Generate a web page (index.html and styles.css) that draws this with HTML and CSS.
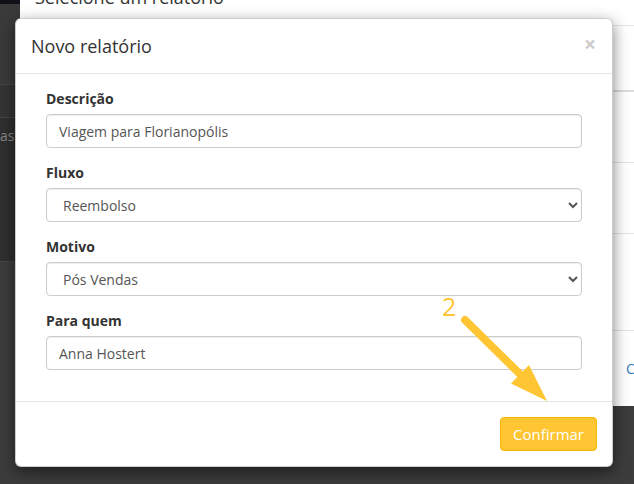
FILE: index.html
```html
<!DOCTYPE html>
<html lang="pt-BR">
<head>
<meta charset="utf-8">
<title>Novo relatório</title>
<link rel="stylesheet" href="styles.css">
</head>
<body>
  <div class="page">
    <div class="page-topbar"></div>
    <div class="page-sec page-sec1"></div>
    <div class="page-sec page-sec2"></div>
    <div class="page-sec page-sec3"><span class="page-text">as</span></div>
    <div class="page-rest"></div>
  </div>

  <div class="bg-modal">
    <div class="bg-header"><h4 class="bg-title">Selecione um relatório</h4></div>
    <div class="bg-row bg-row-head"></div>
    <div class="bg-row bg-row-a"></div>
    <div class="bg-row bg-row-b"></div>
    <div class="bg-row bg-row-c"></div>
    <div class="bg-footer"><span class="bg-link">Cancelar</span></div>
  </div>

  <div class="modal">
    <div class="modal-header">
      <h4 class="modal-title">Novo relatório</h4>
      <span class="close">&times;</span>
    </div>
    <div class="modal-body">
      <form class="form">
        <div class="form-group">
          <label class="label">Descrição</label>
          <input class="form-control" type="text" value="Viagem para Florianopólis">
        </div>
        <div class="form-group">
          <label class="label">Fluxo</label>
          <select class="form-control"><option>Reembolso</option></select>
        </div>
        <div class="form-group">
          <label class="label">Motivo</label>
          <select class="form-control"><option>Pós Vendas</option></select>
        </div>
        <div class="form-group">
          <label class="label">Para quem</label>
          <input class="form-control" type="text" value="Anna Hostert">
        </div>
      </form>
    </div>
    <div class="modal-footer">
      <button class="btn-confirm" type="button">Confirmar</button>
    </div>
  </div>

  <span class="step-number">2</span>
  <svg class="step-arrow" width="120" height="120" viewBox="0 0 120 120">
    <line x1="25" y1="30" x2="84" y2="88" stroke="#ffc533" stroke-width="8" stroke-linecap="round"/>
    <polygon points="107,111 71,93.5 89,75" fill="#ffc533"/>
  </svg>
</body>
</html>
```
FILE: styles.css
```css
* { box-sizing: border-box; }

body {
  margin: 0;
  width: 634px;
  height: 484px;
  overflow: hidden;
  position: relative;
  background: #3c3c3c;
  font-family: "Open Sans", "DejaVu Sans", sans-serif;
  font-size: 14px;
  color: #333;
}

/* underlying page, darkened by backdrop */
.page { display: flex; flex-direction: column; height: 484px; }
.page-topbar { height: 4px; background: #101018; }
.page-sec { border-bottom: 1px solid #454545; }
.page-sec1 { height: 81px; background: #3a3a3a; }
.page-sec2 { height: 33px; background: #343434; }
.page-sec3 { height: 144px; background: #2f2f2f; padding-top: 8px; overflow: hidden; }
.page-text { display: block; margin-left: 0; color: #888; font-size: 14px; line-height: 20px; white-space: nowrap; }
.page-rest { flex: 1; background: #3c3c3c; }

/* background modal */
.bg-modal {
  position: absolute;
  left: 20px;
  top: -30px;
  width: 640px;
  height: 436px;
  background: #fff;
  border-radius: 6px;
}
.bg-header { padding: 15px; border-bottom: 1px solid #e5e5e5; }
.bg-title { margin: 0; font-size: 18px; font-weight: 400; line-height: 25px; color: #333; }
.bg-row { border-bottom: 1px solid #e3e3e3; }
.bg-row-head { height: 66px; border-bottom: 2px solid #dcdcdc; }
.bg-row-a { height: 71px; }
.bg-row-b { height: 71px; }
.bg-row-c { height: 97px; }
.bg-footer { padding: 28px 0 0 606px; }
.bg-link { color: #337ab7; font-size: 14px; line-height: 20px; white-space: nowrap; }

/* front modal */
.modal {
  position: absolute;
  left: 15px;
  top: 18px;
  width: 598px;
  background: #fff;
  border: 1px solid rgba(0, 0, 0, 0.2);
  border-radius: 6px;
  box-shadow: 0 5px 15px rgba(0, 0, 0, 0.5);
}
.modal-header {
  display: flex;
  justify-content: space-between;
  align-items: flex-start;
  padding: 15px 15px 14px;
  border-bottom: 1px solid #e5e5e5;
}
.modal-title { margin: 0; font-size: 18px; font-weight: 400; line-height: 25px; color: #333; }
.close {
  font-size: 21px;
  font-weight: 700;
  line-height: 1;
  color: #000;
  opacity: 0.2;
  margin-right: 1px;
}
.modal-body { padding: 15px 15px 16px; }
.form { padding: 0 15px; margin: 0; }
.form-group { margin-bottom: 15px; }
.label {
  display: block;
  font-weight: 700;
  font-size: 14px;
  line-height: 20px;
  margin-bottom: 5px;
  color: #333;
}
.form-control {
  display: block;
  width: 100%;
  height: 34px;
  padding: 6px 12px;
  font-family: inherit;
  font-size: 14px;
  line-height: 20px;
  color: #555;
  background: #fff;
  border: 1px solid #ccc;
  border-radius: 4px;
  box-shadow: inset 0 1px 1px rgba(0, 0, 0, 0.075);
}
.modal-footer {
  display: flex;
  justify-content: flex-end;
  padding: 15px;
  border-top: 1px solid #e5e5e5;
}
.btn-confirm {
  height: 34px;
  width: 97px;
  padding: 6px 12px;
  font-family: inherit;
  font-size: 15px;
  line-height: 20px;
  color: #fff;
  background: #ffc533;
  border: 1px solid #f4b800;
  border-radius: 4px;
}

/* annotation */
.step-number {
  position: absolute;
  left: 442px;
  top: 294px;
  font-size: 25px;
  line-height: 25px;
  color: #ffc533;
}
.step-arrow { position: absolute; left: 440px; top: 290px; }
```
